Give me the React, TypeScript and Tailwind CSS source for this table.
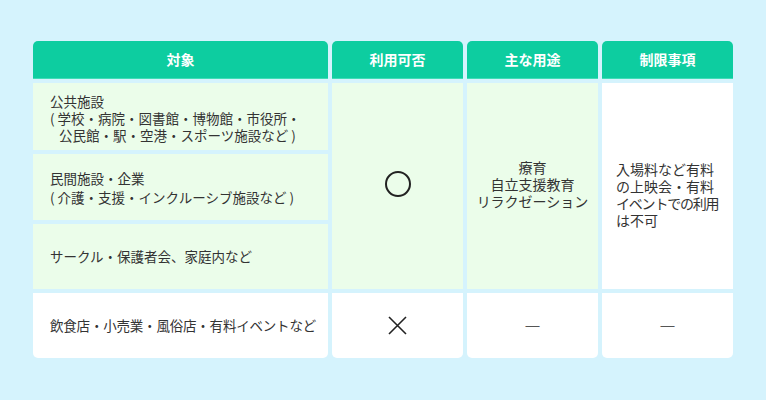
import React from 'react';

const headers = ['対象', '利用可否', '主な用途', '制限事項'];

const App: React.FC = () => {
  return (
    <div className="w-[766px] h-[400px] bg-[#d5f3fd] pt-[41px] pl-[33px] font-['Noto_Sans_CJK_JP','Noto_Sans',sans-serif] text-[#333]">
      <div className="grid grid-cols-[295px_131px_131px_131px] grid-rows-[38px_67px_66px_65px_65px] gap-x-1 gap-y-1">
        {headers.map((h) => (
          <div
            key={h}
            className="flex items-center justify-center rounded-t-[5px] bg-[#0dcda0] text-[14px] font-bold text-white border-b border-[#3fdcb6]"
          >
            {h}
          </div>
        ))}

        {/* 対象 column */}
        <div className="col-start-1 row-start-2 flex items-center bg-[#ebfdea] pl-[17px] pt-[3px] text-[13.5px] leading-[17px]">
          <div>
            <div>公共施設</div>
            <div>( 学校・病院・図書館・博物館・市役所・</div>
            <div className="pl-[9px]">公民館・駅・空港・スポーツ施設など )</div>
          </div>
        </div>
        <div className="col-start-1 row-start-3 flex items-center bg-[#ebfdea] pl-[17px] pt-[2px] text-[13.5px] leading-[19px]">
          <div>
            <div>民間施設・企業</div>
            <div>( 介護・支援・インクルーシブ施設など )</div>
          </div>
        </div>
        <div className="col-start-1 row-start-4 flex items-center bg-[#ebfdea] pl-[17px] text-[13.5px]">
          サークル・保護者会、家庭内など
        </div>
        <div className="col-start-1 row-start-5 flex items-center rounded-b-[5px] bg-white pl-[17px] text-[13.5px] tracking-[-0.2px]">
          飲食店・小売業・風俗店・有料イベントなど
        </div>

        {/* 利用可否 */}
        <div className="col-start-2 row-start-2 row-span-3 flex items-center justify-center bg-[#ebfdea] pb-[4px]">
          <div className="h-[26px] w-[26px] rounded-full border-2 border-[#222]" />
        </div>
        <div className="col-start-2 row-start-5 flex items-center justify-center rounded-b-[5px] bg-white">
          <svg width="19" height="19" viewBox="0 0 19 19">
            <path d="M1 1 L18 18 M18 1 L1 18" stroke="#222" strokeWidth="1.6" fill="none" />
          </svg>
        </div>

        {/* 主な用途 */}
        <div className="col-start-3 row-start-2 row-span-3 flex items-center justify-center bg-[#ebfdea] pb-[3px] text-center text-[14px] leading-[17px]">
          <div>
            <div>療育</div>
            <div>自立支援教育</div>
            <div>リラクゼーション</div>
          </div>
        </div>
        <div className="col-start-3 row-start-5 flex items-center justify-center rounded-b-[5px] bg-white font-['Liberation_Sans',sans-serif] text-[14px] text-[#555]">
          —
        </div>

        {/* 制限事項 */}
        <div className="col-start-4 row-start-2 row-span-3 bg-white pl-[14px] pt-[78px] text-[14px] leading-[17px] whitespace-nowrap">
          <div>入場料など有料</div>
          <div>の上映会・有料</div>
          <div className="tracking-[-1.2px]">イベントでの利用</div>
          <div>は不可</div>
        </div>
        <div className="col-start-4 row-start-5 flex items-center justify-center rounded-b-[5px] bg-white font-['Liberation_Sans',sans-serif] text-[14px] text-[#555]">
          —
        </div>
      </div>
    </div>
  );
};

export default App;
